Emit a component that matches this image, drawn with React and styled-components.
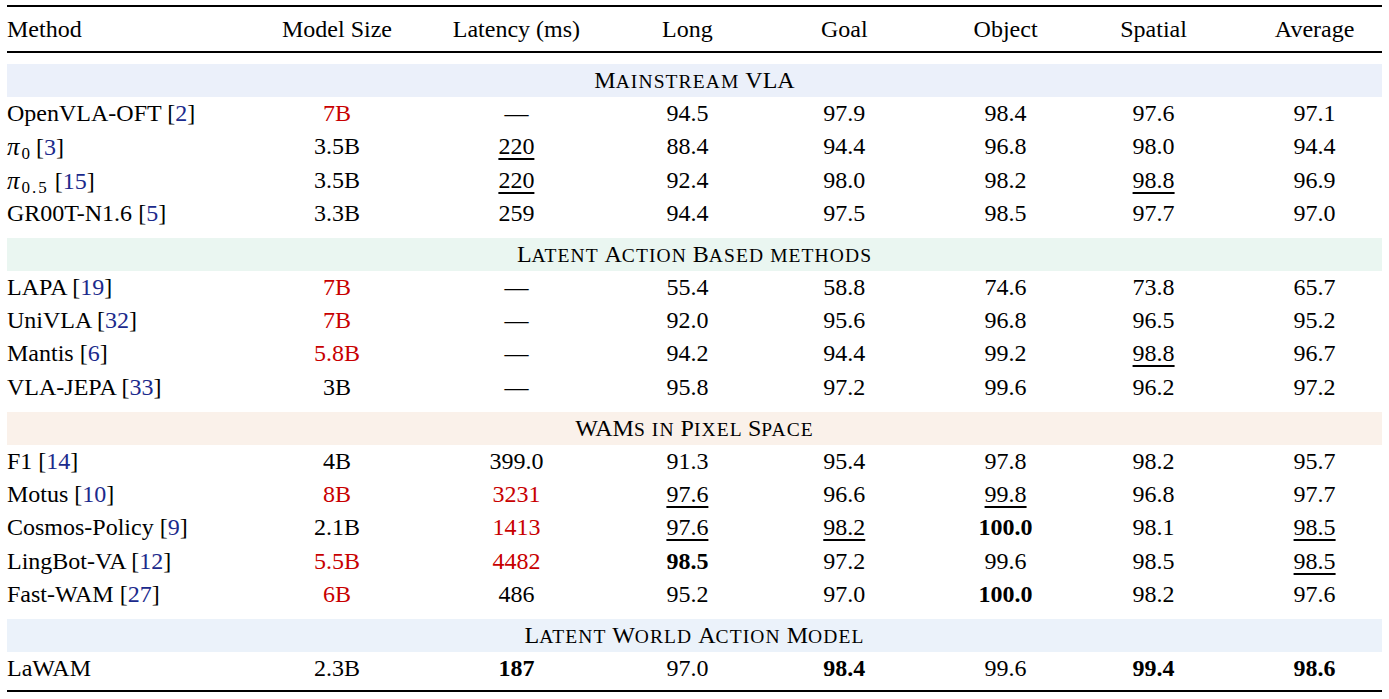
import React from "react";
import styled, { createGlobalStyle } from "styled-components";

const GlobalStyle = createGlobalStyle`
  html, body { margin: 0; padding: 0; background: #ffffff; }
  body { font-family: "Liberation Serif", "Times New Roman", serif; color: #000; }
`;

const COLS = "271px 118px 240.8px 101.2px 212.6px 110px 186px 136px";

const Table = styled.div`
  margin: 5px 0 0 7px;
  width: 1375px;
  font-family: "Liberation Serif", "Times New Roman", serif;
  font-size: 24px;
  border-top: 2px solid #000;
  border-bottom: 2px solid #000;
  padding-bottom: 5px;
`;

const HeaderRow = styled.div`
  display: grid;
  grid-template-columns: ${COLS};
  height: 44px;
  line-height: 44px;
  border-bottom: 2px solid #000;
`;

const Row = styled.div`
  display: grid;
  grid-template-columns: ${COLS};
  height: 33.33px;
  line-height: 33.33px;
  white-space: nowrap;
`;

const Cell = styled.div`
  text-align: ${(p) => (p.$left ? "left" : "center")};
`;

const Band = styled.div`
  margin-top: ${(p) => (p.$first ? "11px" : "7.5px")};
  height: 33px;
  line-height: 33px;
  background: ${(p) => p.$bg};
  text-align: center;
  white-space: nowrap;
`;

const Small = styled.span`
  font-size: 19.5px;
  text-transform: uppercase;
  letter-spacing: 1.1px;
`;

const Value = styled.span`
  color: ${(p) => (p.$red ? "#c80000" : "#000")};
  font-weight: ${(p) => (p.$bold ? 700 : 400)};
  text-decoration: ${(p) => (p.$under ? "underline" : "none")};
  text-decoration-thickness: 1.5px;
  text-underline-offset: 4px;
`;

const Cite = styled.span`
  color: #1b2a8c;
`;

const Pi = styled.span`
  font-style: italic;
  font-family: "Liberation Serif", "Times New Roman", serif;
  font-size: 25px;
`;

const Sub = styled.sub`
  font-size: 17px;
  vertical-align: -4px;
  line-height: 0;
  letter-spacing: ${(p) => (p.$spaced ? "2px" : "0")};
  margin-left: 2px;
`;

function SmallCaps({ text }) {
  const parts = text.match(/[A-Z]+|[^A-Z]+/g) || [];
  return parts.map((p, i) =>
    /[A-Z]/.test(p[0]) ? (
      <span key={i}>{p}</span>
    ) : p.trim() === "" ? (
      <span key={i}>{p}</span>
    ) : (
      <Small key={i}>{p}</Small>
    )
  );
}

function ValueCell({ raw }) {
  let s = raw;
  const flags = { red: false, under: false, bold: false };
  while (s.length && "!_*".includes(s[0])) {
    if (s[0] === "!") flags.red = true;
    if (s[0] === "_") flags.under = true;
    if (s[0] === "*") flags.bold = true;
    s = s.slice(1);
  }
  return (
    <Cell>
      <Value $red={flags.red} $under={flags.under} $bold={flags.bold}>
        {s}
      </Value>
    </Cell>
  );
}

function Method({ name, cite, sub }) {
  return (
    <Cell $left>
      {sub !== undefined ? (
        <>
          <Pi>π</Pi>
          <Sub $spaced={sub.length > 1}>{sub}</Sub>
        </>
      ) : (
        name
      )}
      {cite && (
        <>
          {" "}[<Cite>{cite}</Cite>]
        </>
      )}
    </Cell>
  );
}

const HEAD = ["Model Size", "Latency (ms)", "Long", "Goal", "Object", "Spatial", "Average"];

const SECTIONS = [
  {
    title: "Mainstream VLA",
    bg: "#ebf0fa",
    rows: [
      { name: "OpenVLA-OFT", cite: "2", v: ["!7B", "—", "94.5", "97.9", "98.4", "97.6", "97.1"] },
      { sub: "0", cite: "3", v: ["3.5B", "_220", "88.4", "94.4", "96.8", "98.0", "94.4"] },
      { sub: "0.5", cite: "15", v: ["3.5B", "_220", "92.4", "98.0", "98.2", "_98.8", "96.9"] },
      { name: "GR00T-N1.6", cite: "5", v: ["3.3B", "259", "94.4", "97.5", "98.5", "97.7", "97.0"] },
    ],
  },
  {
    title: "Latent Action Based methods",
    bg: "#eaf6f1",
    rows: [
      { name: "LAPA", cite: "19", v: ["!7B", "—", "55.4", "58.8", "74.6", "73.8", "65.7"] },
      { name: "UniVLA", cite: "32", v: ["!7B", "—", "92.0", "95.6", "96.8", "96.5", "95.2"] },
      { name: "Mantis", cite: "6", v: ["!5.8B", "—", "94.2", "94.4", "99.2", "_98.8", "96.7"] },
      { name: "VLA-JEPA", cite: "33", v: ["3B", "—", "95.8", "97.2", "99.6", "96.2", "97.2"] },
    ],
  },
  {
    title: "WAMs in Pixel Space",
    bg: "#faf1ea",
    rows: [
      { name: "F1", cite: "14", v: ["4B", "399.0", "91.3", "95.4", "97.8", "98.2", "95.7"] },
      { name: "Motus", cite: "10", v: ["!8B", "!3231", "_97.6", "96.6", "_99.8", "96.8", "97.7"] },
      { name: "Cosmos-Policy", cite: "9", v: ["2.1B", "!1413", "_97.6", "_98.2", "*100.0", "98.1", "_98.5"] },
      { name: "LingBot-VA", cite: "12", v: ["!5.5B", "!4482", "*98.5", "97.2", "99.6", "98.5", "_98.5"] },
      { name: "Fast-WAM", cite: "27", v: ["!6B", "486", "95.2", "97.0", "*100.0", "98.2", "97.6"] },
    ],
  },
  {
    title: "Latent World Action Model",
    bg: "#ebf2fa",
    rows: [
      { name: "LaWAM", v: ["2.3B", "*187", "97.0", "*98.4", "99.6", "*99.4", "*98.6"] },
    ],
  },
];

export default function App() {
  return (
    <>
      <GlobalStyle />
      <Table>
        <HeaderRow>
          <Cell $left>Method</Cell>
          {HEAD.map((h) => (
            <Cell key={h}>{h}</Cell>
          ))}
        </HeaderRow>
        {SECTIONS.map((sec, si) => (
          <React.Fragment key={sec.title}>
            <Band $bg={sec.bg} $first={si === 0}>
              <SmallCaps text={sec.title} />
            </Band>
            {sec.rows.map((r, i) => (
              <Row key={i}>
                <Method name={r.name} cite={r.cite} sub={r.sub} />
                {r.v.map((x, j) => (
                  <ValueCell key={j} raw={x} />
                ))}
              </Row>
            ))}
          </React.Fragment>
        ))}
      </Table>
    </>
  );
}
